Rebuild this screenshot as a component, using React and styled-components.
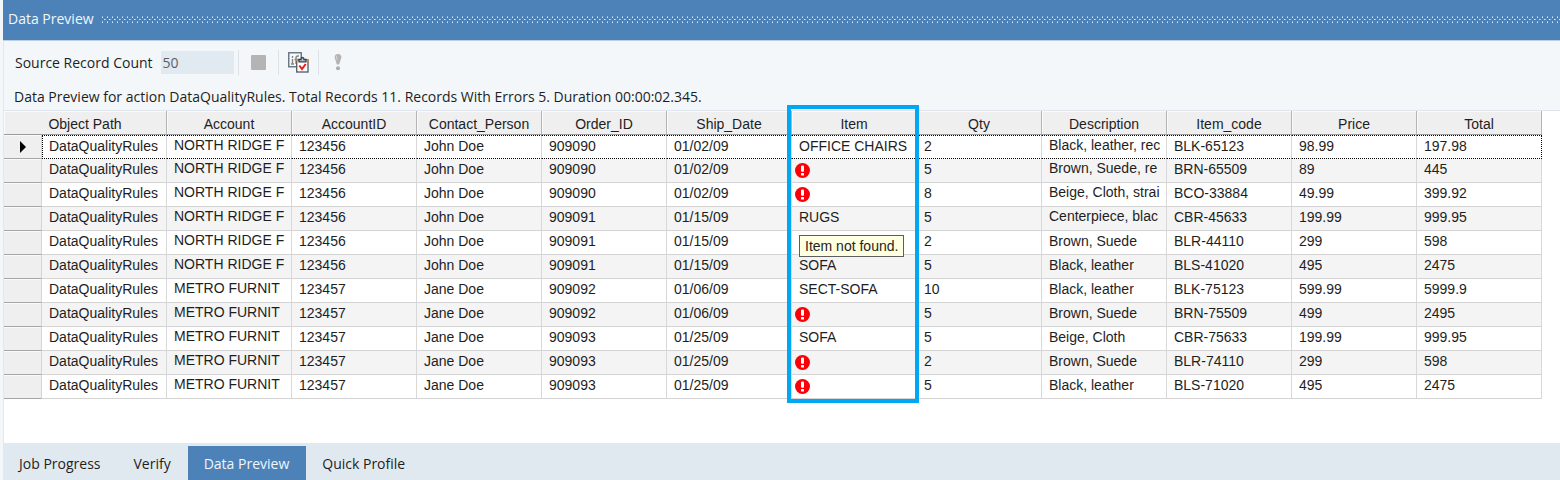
import React from 'react';
import styled, { createGlobalStyle, css } from 'styled-components';

const uiFont = '"Open Sans", "Noto Sans", sans-serif';
const gridFont = '"Liberation Sans", Arial, sans-serif';

const GlobalStyle = createGlobalStyle`
  *, *::before, *::after {
    box-sizing: border-box;
  }
  body {
    margin: 0;
    background-color: #f3f7fa;
    color: #1e1e1e;
    font-family: ${uiFont};
    font-size: 14px;
  }
`;

const Window = styled.div`
  display: flex;
  flex-direction: column;
  min-height: 100vh;
  padding-left: 3px;
`;

const TitleBar = styled.header`
  display: flex;
  align-items: center;
  gap: 8px;
  height: 41px;
  padding: 0 0 2px 5px;
  background-color: #4c82b8;
  border-bottom: 1px solid #bccfe4;
`;

const Title = styled.h1`
  margin: 0;
  color: #f1f6fb;
  font-size: 14px;
  font-weight: 400;
  line-height: 20px;
`;

const Grip = styled.svg`
  flex: 1;
  height: 7px;
`;

const Panel = styled.main`
  flex: 1;
  display: flex;
  flex-direction: column;
  border-left: 1px solid #e1e8ef;
`;

const Toolbar = styled.div`
  display: flex;
  align-items: center;
  height: 42px;
  padding: 0 0 0 11px;
`;

const CountLabel = styled.label`
  margin-right: 8px;
`;

const CountInput = styled.input`
  width: 73px;
  height: 23px;
  padding: 0 2px;
  border: 0;
  background-color: #e1e9f1;
  color: #5c6065;
  font-family: inherit;
  font-size: 14px;
`;

const Separator = styled.span`
  width: 1px;
  height: 25px;
  margin-left: 4px;
  background-color: #dde1e5;
`;

const ToolButton = styled.button`
  display: flex;
  align-items: center;
  justify-content: center;
  width: 35px;
  height: 25px;
  padding: 0 0 0 4px;
  border: 0;
  background: none;
`;

const Summary = styled.p`
  margin: 0;
  padding: 5px 0 4px 10px;
  line-height: 18px;
`;

const GridArea = styled.div`
  flex: 1;
  min-height: 332px;
  background-color: #fff;
  border-top: 1px solid #dfe5ec;
`;

const GridFrame = styled.div`
  position: relative;
  width: max-content;
`;

const Grid = styled.table`
  table-layout: fixed;
  width: 1538px;
  border-collapse: separate;
  border-spacing: 0;
  font-family: ${gridFont};
  font-size: 14px;
  line-height: 16px;
`;

const ColumnHeader = styled.th`
  height: 24px;
  padding: 3px 0 0;
  background-color: #efefef;
  border-right: 1px solid #b4b4b4;
  border-bottom: 1px solid #9c9c9c;
  box-shadow: inset 1px 1px #fafafa;
  font-weight: 400;
  text-align: center;
`;

const RowHeader = styled.th`
  height: 24px;
  padding: 2px 0 0;
  background-color: #efefef;
  border-right: 1px solid #d4d4d4;
  border-bottom: 1px solid #a6a6a6;
  box-shadow: inset 0 1px #fafafa;
`;

const Row = styled.tr`
  background-color: ${({ $striped }) => ($striped ? '#f4f4f4' : '#fff')};
`;

const Cell = styled.td`
  height: 24px;
  padding: ${({ $clipped }) => ($clipped ? '1px 0 0 7px' : '2px 0 0 7px')};
  border-right: 1px solid #d8d8d8;
  border-bottom: 1px solid #d4d4d4;
  overflow: hidden;
  vertical-align: top;
  white-space: nowrap;

  ${({ $focused }) =>
    $focused &&
    css`
      border-top: 1px dotted #000;
      border-bottom: 1px dotted #000;

      &:nth-child(2) {
        border-left: 1px dotted #000;
        padding-left: 6px;
      }
      &:last-child {
        border-right: 1px dotted #000;
      }
    `}
`;

const ErrorCell = styled(Cell)`
  padding: 4px 0 0 3px;
`;

const CellIcon = styled.svg`
  display: block;
`;

const ColumnHighlight = styled.div`
  position: absolute;
  top: -6px;
  bottom: -4px;
  left: 783px;
  width: 132px;
  border: 4px solid #00a8f3;
  pointer-events: none;
`;

const Tooltip = styled.div`
  position: absolute;
  top: 124px;
  left: 795px;
  padding: 2px 5px;
  background-color: #ffffe1;
  border: 1px solid #5e5e5e;
  font-family: ${gridFont};
  font-size: 14px;
  line-height: 16px;
  white-space: nowrap;
`;

const Tabs = styled.nav`
  display: flex;
  height: 37px;
  padding-top: 3px;
  background-color: #e1e9f0;
`;

const Tab = styled.button`
  padding: 0 17px 0 16px;
  border: 0;
  background-color: ${({ $active }) => ($active ? '#4c82b8' : 'transparent')};
  color: ${({ $active }) => ($active ? '#f1f6fb' : '#1e1e1e')};
  font-family: inherit;
  font-size: 14px;
`;

const columns = [
  'Account',
  'AccountID',
  'Contact_Person',
  'Order_ID',
  'Ship_Date',
  'Item',
  'Qty',
  'Description',
  'Item_code',
  'Price',
  'Total',
];

const ACCOUNT = 0;
const ITEM = 5;
const DESCRIPTION = 7;

// a null item is a record that failed its lookup
const records = [
  ['NORTH RIDGE F', '123456', 'John Doe', '909090', '01/02/09', 'OFFICE CHAIRS', '2', 'Black, leather, rec', 'BLK-65123', '98.99', '197.98'],
  ['NORTH RIDGE F', '123456', 'John Doe', '909090', '01/02/09', null, '5', 'Brown, Suede, re', 'BRN-65509', '89', '445'],
  ['NORTH RIDGE F', '123456', 'John Doe', '909090', '01/02/09', null, '8', 'Beige, Cloth, strai', 'BCO-33884', '49.99', '399.92'],
  ['NORTH RIDGE F', '123456', 'John Doe', '909091', '01/15/09', 'RUGS', '5', 'Centerpiece, blac', 'CBR-45633', '199.99', '999.95'],
  ['NORTH RIDGE F', '123456', 'John Doe', '909091', '01/15/09', '', '2', 'Brown, Suede', 'BLR-44110', '299', '598'],
  ['NORTH RIDGE F', '123456', 'John Doe', '909091', '01/15/09', 'SOFA', '5', 'Black, leather', 'BLS-41020', '495', '2475'],
  ['METRO FURNIT', '123457', 'Jane Doe', '909092', '01/06/09', 'SECT-SOFA', '10', 'Black, leather', 'BLK-75123', '599.99', '5999.9'],
  ['METRO FURNIT', '123457', 'Jane Doe', '909092', '01/06/09', null, '5', 'Brown, Suede', 'BRN-75509', '499', '2495'],
  ['METRO FURNIT', '123457', 'Jane Doe', '909093', '01/25/09', 'SOFA', '5', 'Beige, Cloth', 'CBR-75633', '199.99', '999.95'],
  ['METRO FURNIT', '123457', 'Jane Doe', '909093', '01/25/09', null, '2', 'Brown, Suede', 'BLR-74110', '299', '598'],
  ['METRO FURNIT', '123457', 'Jane Doe', '909093', '01/25/09', null, '5', 'Black, leather', 'BLS-71020', '495', '2475'],
];

const tabs = ['Job Progress', 'Verify', 'Data Preview', 'Quick Profile'];

function TitleGrip() {
  return (
    <Grip aria-hidden="true">
      <defs>
        <pattern id="grip" width="5" height="7" patternUnits="userSpaceOnUse">
          <path d="M0 1h1v1h-1zM0 6h1v1h-1zM2 3h1v1h-1z" fill="#dbe7f3" />
          <path d="M0 0h1v1h-1zM0 5h1v1h-1zM3 3h1v1h-1z" fill="#9dbad9" />
        </pattern>
      </defs>
      <rect width="100%" height="7" fill="url(#grip)" />
    </Grip>
  );
}

function StopIcon() {
  return (
    <svg width="15" height="15" viewBox="0 0 15 15" aria-hidden="true">
      <rect width="15" height="15" rx="1" fill="#b4b4b4" />
    </svg>
  );
}

function RulesIcon() {
  return (
    <svg width="21" height="21" viewBox="0 0 21 21" aria-hidden="true">
      <rect x="0.75" y="0.75" width="12.5" height="14" fill="#f6f8fa" stroke="#66727e" strokeWidth="1.4" />
      <path d="M4.500 4v2M4.500 7v5M3 12h3M8 12V6q0-2 2-2h1M6.500 7.500h4" stroke="#7b8690" strokeWidth="1.4" fill="none" />
      <rect x="8.700" y="7.700" width="11.300" height="12.300" fill="#fff" stroke="#59646f" strokeWidth="1.4" />
      <path d="M8 7h2.500v2h-2.500zM18.500 7h2.500v2h-2.500z" fill="#d98736" />
      <path d="M11 9.800V7.500h2q0-2 1.500-2t1.500 2h2v2.300z" fill="#b9c4cf" stroke="#35424f" strokeWidth="1.300" />
      <path d="M11.300 13.500l2.700 3.500 3.700-5" fill="none" stroke="#e81e1e" strokeWidth="2" />
    </svg>
  );
}

function ExclamationIcon() {
  return (
    <svg width="8" height="17" viewBox="0 0 8 17" aria-hidden="true">
      <path d="M4 0c2.200 0 3.500 1.300 3.300 3.500L5.200 10.500H2.800L0.700 3.500C0.500 1.300 1.800 0 4 0z" fill="#b3b3b3" />
      <path d="M3 1.500c-1 .5-1 2-.5 3.500l.8 2z" fill="#dedede" />
      <circle cx="4" cy="14.300" r="2" fill="#ababab" />
    </svg>
  );
}

function ErrorIcon() {
  return (
    <CellIcon width="15" height="15" viewBox="0 0 15 15" role="img" aria-label="Item not found">
      <circle cx="7.500" cy="7.500" r="7.500" fill="#fb0007" />
      <rect x="6" y="2.500" width="3" height="6.300" rx="1" fill="#fff" />
      <rect x="6" y="10" width="3" height="2.500" rx="0.5" fill="#fff" />
    </CellIcon>
  );
}

function CurrentRowIcon() {
  return (
    <svg width="6" height="12" viewBox="0 0 6 12" role="img" aria-label="Current row">
      <path d="M0 0l6 6-6 6z" fill="#000" />
    </svg>
  );
}

function DataRow({ record, index }) {
  const focused = index === 0;

  return (
    <Row $striped={index % 2 === 1}>
      <RowHeader scope="row">{focused && <CurrentRowIcon />}</RowHeader>
      <Cell $focused={focused}>DataQualityRules</Cell>
      {record.map((value, i) => {
        if (i === ITEM && value === null) {
          return (
            <ErrorCell key={columns[i]}>
              <ErrorIcon />
            </ErrorCell>
          );
        }
        const clipped = i === ACCOUNT || (i === DESCRIPTION && index < 4);
        return (
          <Cell key={columns[i]} $focused={focused} $clipped={clipped}>
            {value}
          </Cell>
        );
      })}
    </Row>
  );
}

export default function App() {
  return (
    <>
      <GlobalStyle />
      <Window>
        <TitleBar>
          <Title>Data Preview</Title>
          <TitleGrip />
        </TitleBar>
        <Panel>
          <Toolbar>
            <CountLabel htmlFor="record-count">Source Record Count</CountLabel>
            <CountInput id="record-count" defaultValue="50" readOnly />
            <Separator />
            <ToolButton type="button" aria-label="Stop">
              <StopIcon />
            </ToolButton>
            <Separator />
            <ToolButton type="button" aria-label="Data quality rules">
              <RulesIcon />
            </ToolButton>
            <Separator />
            <ToolButton type="button" aria-label="Show errors">
              <ExclamationIcon />
            </ToolButton>
          </Toolbar>
          <Summary>
            Data Preview for action DataQualityRules. Total Records 11. Records With Errors 5. Duration 00:00:02.345.
          </Summary>
          <GridArea>
            <GridFrame>
              <Grid>
                <colgroup>
                  <col width="38" />
                  <col span="12" width="125" />
                </colgroup>
                <thead>
                  <tr>
                    <ColumnHeader colSpan={2}>Object Path</ColumnHeader>
                    {columns.map((name) => (
                      <ColumnHeader key={name}>{name}</ColumnHeader>
                    ))}
                  </tr>
                </thead>
                <tbody>
                  {records.map((record, index) => (
                    <DataRow key={index} record={record} index={index} />
                  ))}
                </tbody>
              </Grid>
              <ColumnHighlight />
              <Tooltip role="tooltip">Item not found.</Tooltip>
            </GridFrame>
          </GridArea>
        </Panel>
        <Tabs>
          {tabs.map((name) => (
            <Tab key={name} type="button" $active={name === 'Data Preview'}>
              {name}
            </Tab>
          ))}
        </Tabs>
      </Window>
    </>
  );
}
